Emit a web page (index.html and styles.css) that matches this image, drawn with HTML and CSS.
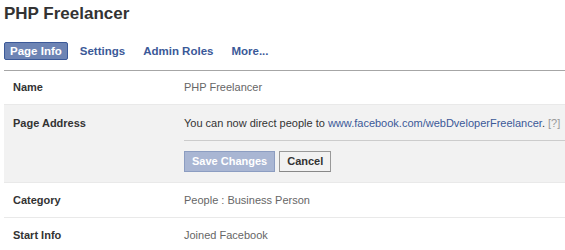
FILE: index.html
```html
<!DOCTYPE html>
<html>
<head>
  <meta name="viewport" content="width=device-width, initial-scale=1">
  <link rel="stylesheet" href="styles.css">
</head>
<body>

<h2 class="page-title">PHP Freelancer</h2>

<ul class="tabs">
  <li><a href="#" class="active">Page Info</a></li>
  <li><a href="#">Settings</a></li>
  <li><a href="#">Admin Roles</a></li>
  <li><a href="#">More...</a></li>
</ul>

<div class="info">
  <div class="row">
    <div class="label">Name</div>
    <div class="value">PHP Freelancer</div>
  </div>
  <div class="row editing">
    <div class="label">Page Address</div>
    <div class="value">
      <p class="address">You can now direct people to <a href="#">www.facebook.com/webDveloperFreelancer</a>. <span class="help">[?]</span></p>
      <div class="actions">
        <button class="btn save" disabled>Save Changes</button>
        <button class="btn cancel">Cancel</button>
      </div>
    </div>
  </div>
  <div class="row">
    <div class="label">Category</div>
    <div class="value">People : Business Person</div>
  </div>
  <div class="row">
    <div class="label">Start Info</div>
    <div class="value">Joined Facebook</div>
  </div>
</div>

</body>
</html>
```

FILE: styles.css
```css
body {
  font-family: "Liberation Sans", Arial, sans-serif;
  font-size: 11px;
  color: #333;
  margin: 0;
  padding: 0 0 0 4px;
  background: #fff;
}

.page-title {
  font-size: 17px;
  font-weight: bold;
  margin: 0;
  padding: 4px 0 0 0;
  line-height: 20px;
  color: #333;
}

.tabs {
  list-style: none;
  margin: 18px 0 0 0;
  padding: 0 0 10px 0;
  display: flex;
  gap: 6px;
  border-bottom: 1px solid #a6a6a6;
}

.tabs a {
  display: block;
  font-size: 11.5px;
  font-weight: bold;
  color: #3b5998;
  text-decoration: none;
  padding: 1px 5px;
  line-height: 14px;
  border: 1px solid transparent;
}

.tabs a.active {
  background-color: #6d84b4;
  border-color: #3b5998;
  color: #fff;
  border-radius: 2px;
}

.row {
  display: grid;
  grid-template-columns: 171px 1fr;
  padding: 11px 0 10px 9px;
  line-height: 13px;
  border-top: 1px solid #e9e9e9;
}

.row:first-child {
  border-top: none;
  padding-top: 10px;
}

.label {
  font-weight: bold;
  color: #333;
}

.value {
  color: #666;
}

.row.editing {
  background-color: #f2f2f2;
  padding-top: 12px;
}

.address {
  margin: 0;
  padding-bottom: 10px;
  border-bottom: 1px solid #ccc;
  color: #333;
  white-space: nowrap;
}

.address a {
  color: #3b5998;
  text-decoration: none;
}

.help {
  color: #999;
}

.actions {
  display: flex;
  gap: 4px;
  margin-top: 10px;
}

.btn {
  font-family: "Liberation Sans", Arial, sans-serif;
  font-size: 11px;
  font-weight: bold;
  padding: 3px 7px;
  line-height: 13px;
  cursor: pointer;
}

.btn.save {
  background-color: #a9b6d3;
  border: 1px solid #8c9dc1;
  color: #fff;
}

.btn.cancel {
  background-color: #f2f2f2;
  border: 1px solid #999;
  border-bottom-color: #888;
  color: #333;
}
```
